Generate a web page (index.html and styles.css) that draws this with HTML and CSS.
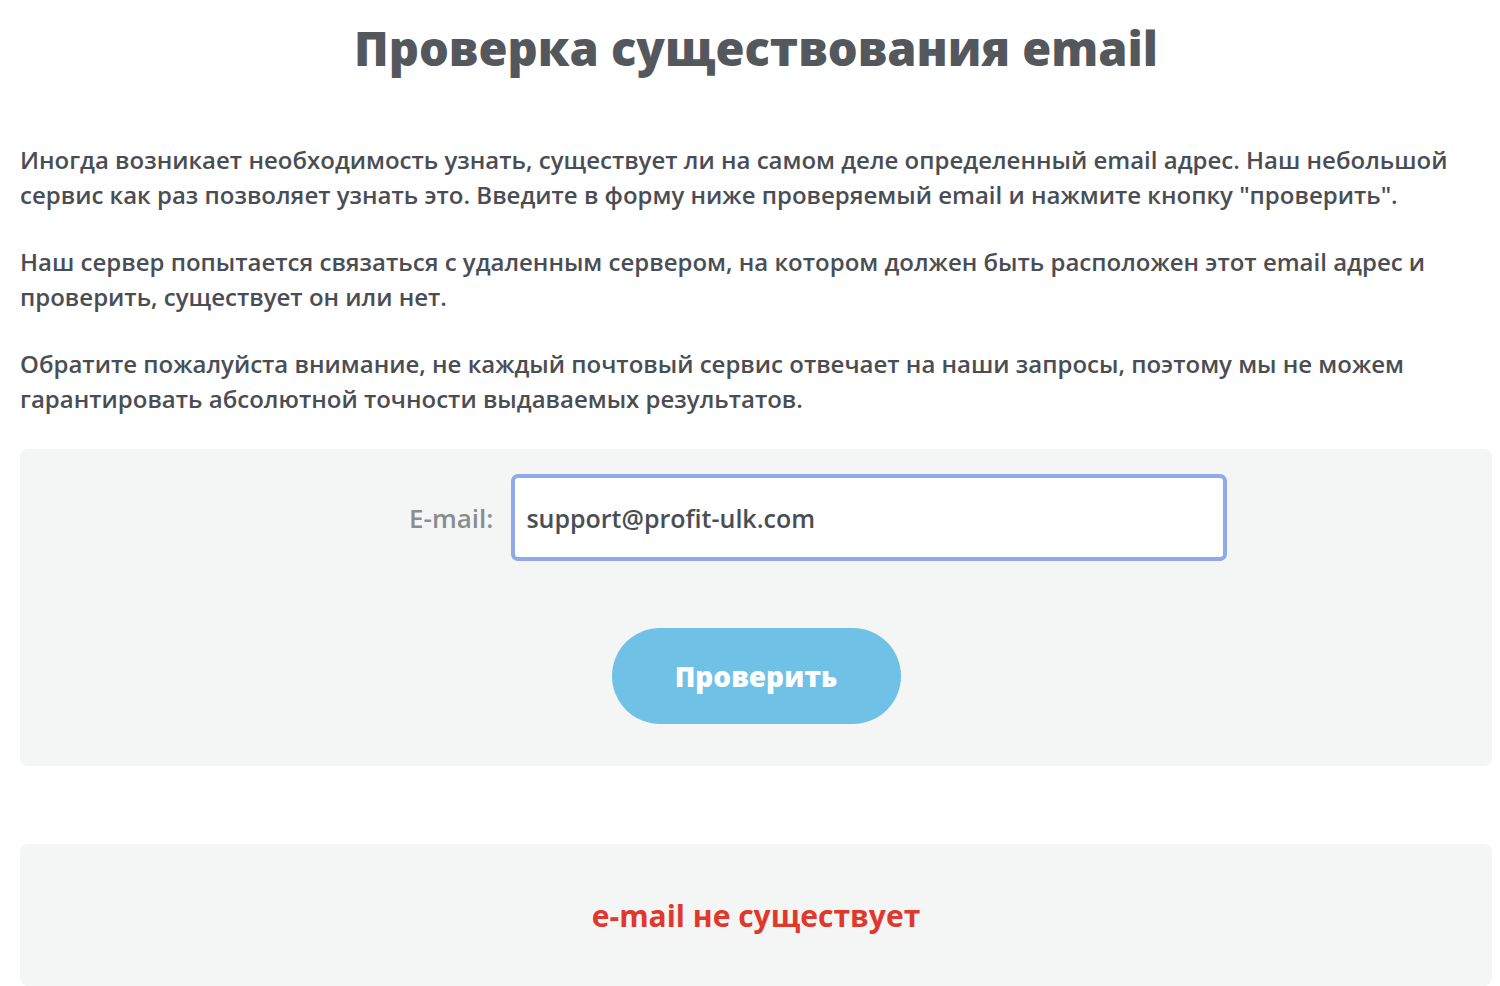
FILE: index.html
```html
<!DOCTYPE html>
<html lang="ru">
<head>
  <meta charset="UTF-8" />
  <meta name="viewport" content="width=device-width, initial-scale=1.0" />
  <title>Проверка существования email</title>
  <link rel="stylesheet" href="styles.css">
</head>
<body>
  <div class="page">
    <h1 class="page-title">Проверка существования email</h1>

    <div class="intro">
      <p>Иногда возникает необходимость узнать, существует ли на самом деле определенный email адрес. Наш небольшой сервис как раз позволяет узнать это. Введите в форму ниже проверяемый email и нажмите кнопку "проверить".</p>
      <p>Наш сервер попытается связаться с удаленным сервером, на котором должен быть расположен этот email адрес и проверить, существует он или нет.</p>
      <p>Обратите пожалуйста внимание, не каждый почтовый сервис отвечает на наши запросы, поэтому мы не можем гарантировать абсолютной точности выдаваемых результатов.</p>
    </div>

    <form class="check-form" onsubmit="return false;">
      <div class="form-row">
        <label for="email" class="form-label">E-mail:</label>
        <input type="text" id="email" class="email-input" value="support@profit-ulk.com">
      </div>
      <button type="submit" class="check-button">Проверить</button>
    </form>

    <div class="result-box">
      <span class="result-text">e-mail не существует</span>
    </div>
  </div>
</body>
</html>
```

FILE: styles.css
```css
body {
  margin: 0;
  font-family: "Open Sans", Arial, sans-serif;
  background-color: #fff;
  color: #4a4e54;
}

.page {
  padding: 0 8px 0 20px;
}

.page-title {
  margin: 0;
  padding-top: 18px;
  text-align: center;
  font-size: 47px;
  font-weight: 800;
  color: #54585d;
  line-height: 60px;
}

.intro {
  margin-top: 64px;
}

.intro p {
  margin: 0 0 32px;
  font-size: 24px;
  font-weight: 600;
  line-height: 35px;
}

.check-form {
  background-color: #f4f5f5;
  border-radius: 8px;
  margin-top: 33px;
  padding: 25px 0 42px;
  display: flex;
  flex-direction: column;
  align-items: center;
}

.form-row {
  align-self: flex-start;
  margin-left: 389px;
  display: flex;
  align-items: center;
  gap: 18px;
}

.form-label {
  font-size: 26px;
  font-weight: 600;
  color: #8a8d90;
}

.email-input {
  width: 716px;
  height: 87px;
  box-sizing: border-box;
  border: 4px solid #8fa9ea;
  border-radius: 7px;
  padding: 0 11px;
  font-family: inherit;
  font-size: 25px;
  font-weight: 600;
  color: #4a4e54;
  background: #fff;
  outline: none;
}

.check-button {
  margin-top: 67px;
  width: 289px;
  height: 96px;
  border: none;
  border-radius: 48px;
  background-color: #6fc1e6;
  color: #fff;
  font-family: inherit;
  font-size: 28px;
  font-weight: 800;
  cursor: pointer;
}

.result-box {
  margin-top: 78px;
  background-color: #f4f5f5;
  border-radius: 8px;
  height: 142px;
  display: flex;
  align-items: center;
  justify-content: center;
}

.result-text {
  color: #e0392b;
  font-size: 30px;
  font-weight: 700;
}
```
